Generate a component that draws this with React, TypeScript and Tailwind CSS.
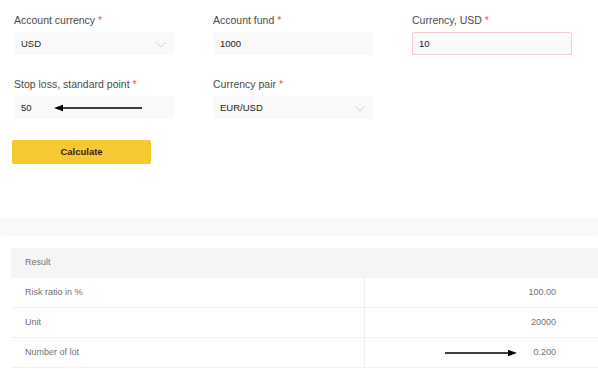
import React from 'react';

const Req = () => <span className="text-[#f0505f]"> *</span>;

const Chevron = () => (
    <svg width="10" height="6" viewBox="0 0 10 6" className="absolute right-[7px] top-[9px]">
        <path d="M0.5 0.5 L5 5 L9.5 0.5" fill="none" stroke="#c8c8c8" strokeWidth="0.8" />
    </svg>
);

const ArrowLeft = () => (
    <svg width="90" height="8" viewBox="0 0 90 8" className="absolute left-[39px] top-[7px]">
        <line x1="8" y1="4" x2="88" y2="4" stroke="#000" strokeWidth="1.6" />
        <path d="M0 4 L9 0.8 L9 7.2 Z" fill="#000" />
    </svg>
);

const Field = ({
    label,
    value,
    select,
    error,
    children,
}: {
    label: string;
    value: string;
    select?: boolean;
    error?: boolean;
    children?: React.ReactNode;
}) => (
    <div className="w-[160px]">
        <div className="text-[10.5px] leading-[14px] text-[#4a4a4a] mb-[5px] pt-[1px]">
            {label}
            <Req />
        </div>
        <div
            className={`relative h-[23px] rounded-[2px] bg-[#f9f9f9] px-[6px] flex items-center text-[9.5px] text-[#222] border ${
                error ? 'border-[#f7cdd3]' : 'border-[#f9f9f9]'
            }`}
        >
            <span className="pt-[1px]">{value}</span>
            {select && <Chevron />}
            {children}
        </div>
    </div>
);

const rows = [
    { name: 'Risk ratio in %', value: '100.00' },
    { name: 'Unit', value: '20000' },
    { name: 'Number of lot', value: '0.200', arrow: true },
];

export default function App() {
    return (
        <div className="w-[598px] h-[369px] overflow-hidden bg-white" style={{ fontFamily: '"Liberation Sans", Arial, sans-serif' }}>
            <div className="pl-[14px] pt-[12px]">
                <div className="flex gap-x-[39px]">
                    <Field label="Account currency" value="USD" select />
                    <Field label="Account fund" value="1000" />
                    <Field label="Currency, USD" value="10" error />
                </div>
                <div className="flex gap-x-[39px] mt-[21px]">
                    <Field label="Stop loss, standard point" value="50">
                        <ArrowLeft />
                    </Field>
                    <Field label="Currency pair" value="EUR/USD" select />
                </div>
            </div>

            <div className="pl-[12px] mt-[19px]">
                <button className="w-[139px] h-[24px] rounded-[2px] bg-[#f6c832] text-[9.5px] font-bold text-[#3b1f12]">
                    Calculate
                </button>
            </div>

            <div className="mt-[54px] h-[18px] bg-[#f9f9f9] rounded-[3px]"></div>

            <div className="mt-[12px] ml-[11px] w-[600px] text-[9px] text-[#727272]">
                <div className="h-[30px] bg-[#f5f5f5] flex items-center pl-[14px]">Result</div>
                {rows.map((r) => (
                    <div key={r.name} className="h-[30px] flex border-b border-[#f1f1f1]">
                        <div className="w-[354px] border-r border-[#eeeeee] flex items-center pl-[14px]">{r.name}</div>
                        <div className="relative w-[191px] flex items-center justify-end">
                            {r.arrow && (
                                <svg width="72" height="8" viewBox="0 0 72 8" className="absolute left-[80px] top-[11px]">
                                    <line x1="0" y1="4" x2="63" y2="4" stroke="#000" strokeWidth="1.6" />
                                    <path d="M72 4 L63 0.8 L63 7.2 Z" fill="#000" />
                                </svg>
                            )}
                            {r.value}
                        </div>
                    </div>
                ))}
            </div>
        </div>
    );
}
